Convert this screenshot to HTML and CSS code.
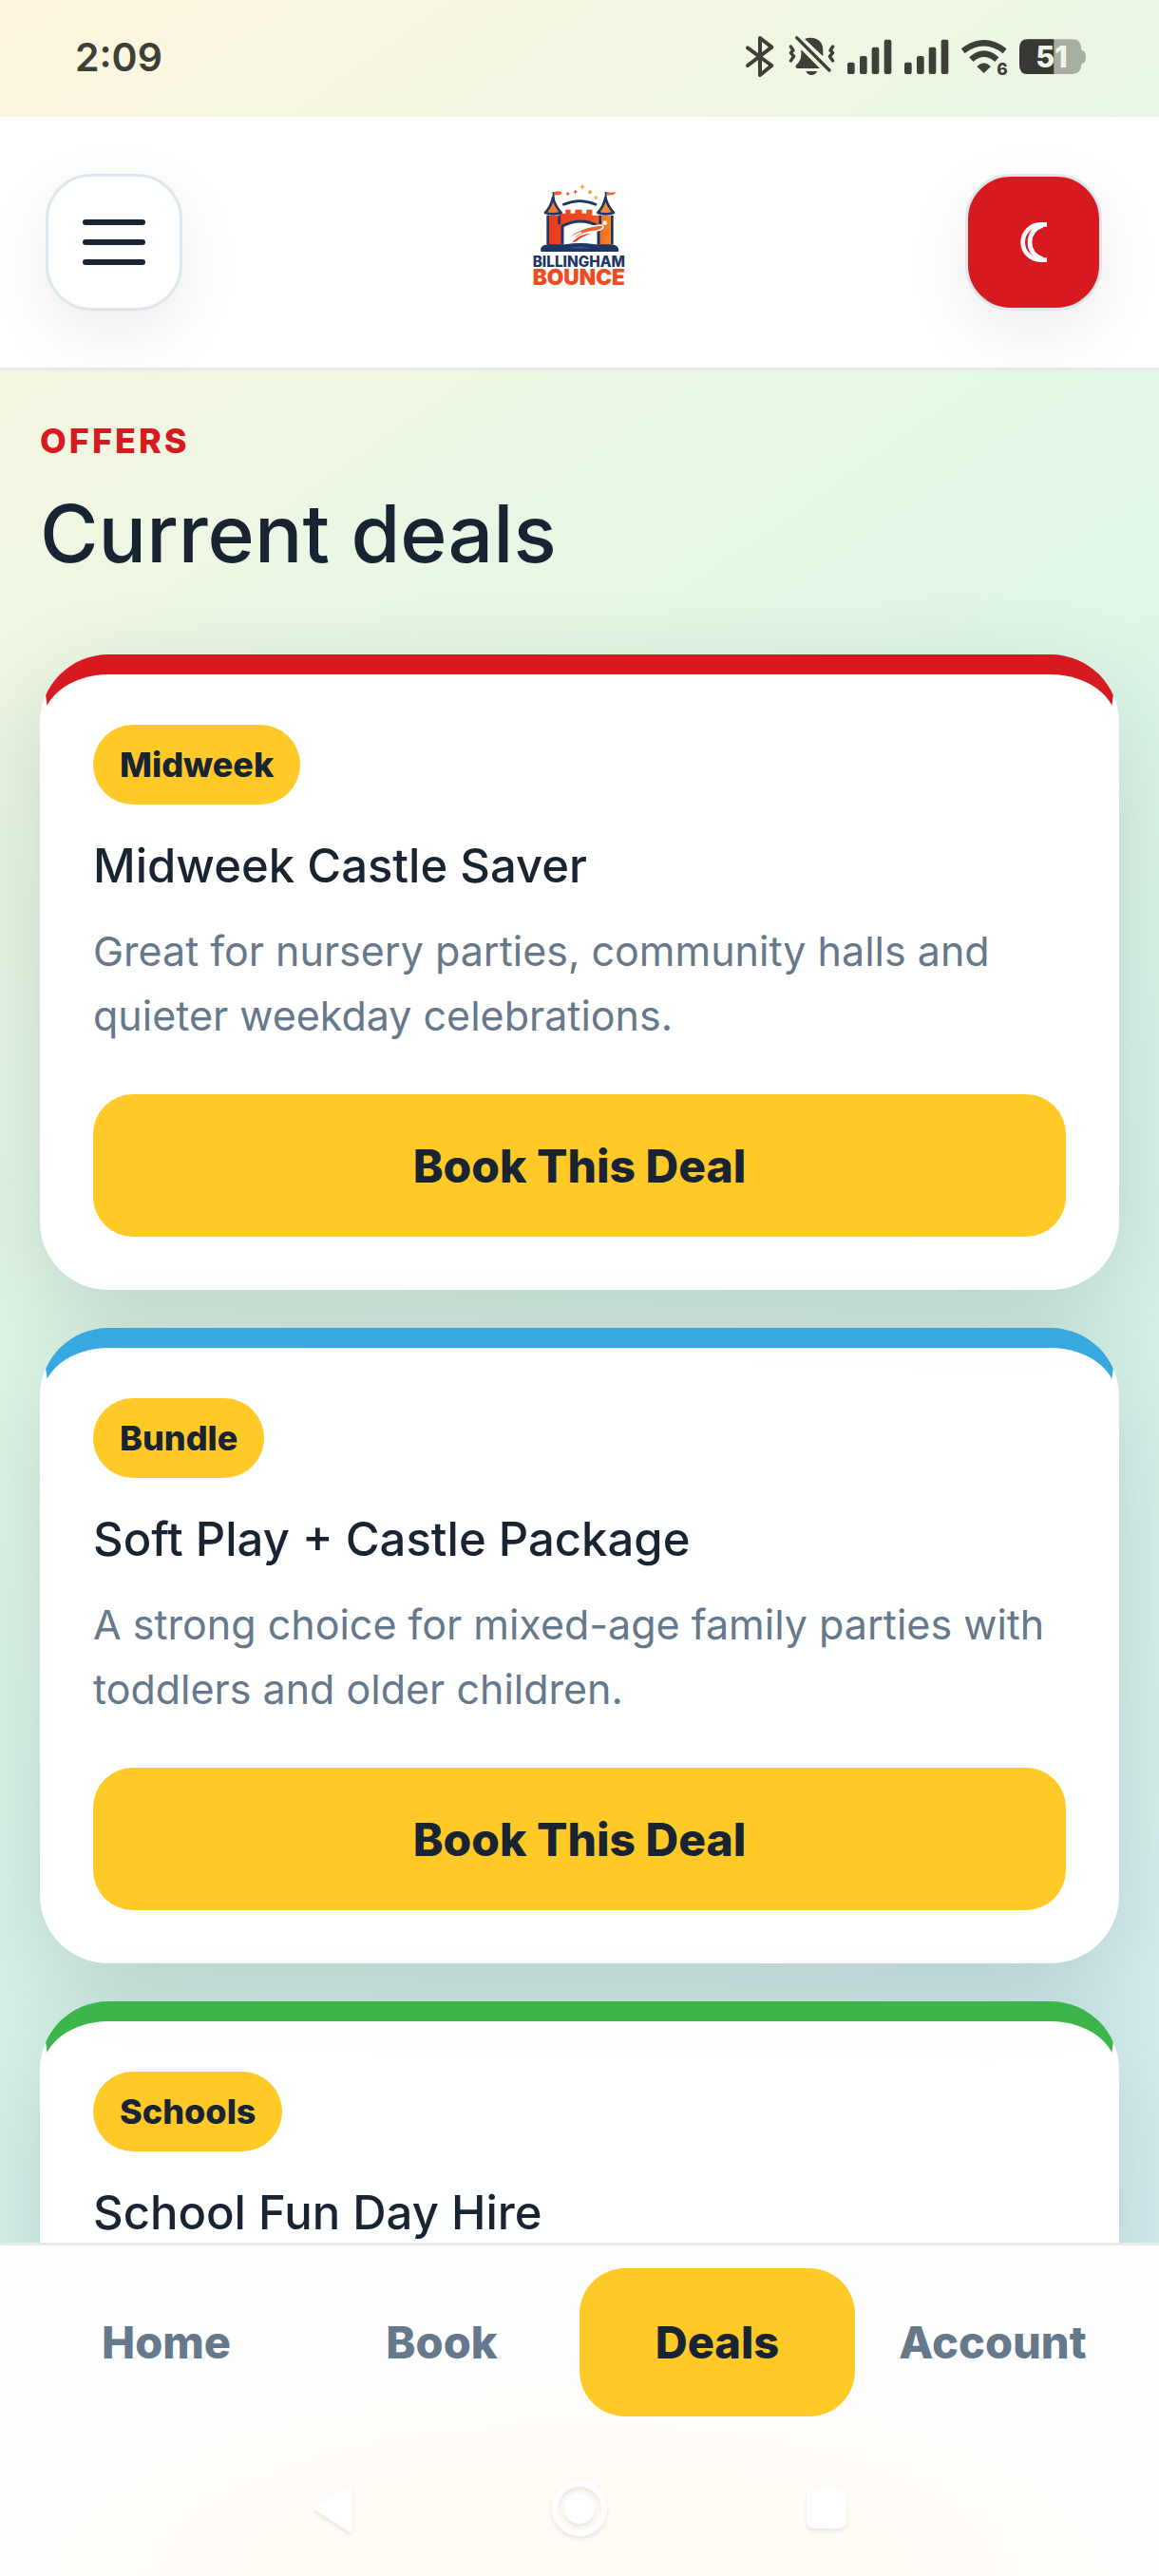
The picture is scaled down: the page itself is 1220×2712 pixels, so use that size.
FILE: index.html
```
<!DOCTYPE html>
<html lang="en">
<head>
  <meta charset="UTF-8">
  <meta name="viewport" content="width=device-width, initial-scale=1">
  <title>Billingham Bounce - Deals</title>
  <link rel="stylesheet" href="styles.css">
</head>
<body>
  <div class="status-bar">
    <span class="time">2:09</span>
    <svg class="status-icons" viewBox="0 -16 1080 162" width="360" height="54" aria-hidden="true">
      <!-- bluetooth -->
      <path d="M12 36 L88 92 L51 122 V5 L88 34 L12 92" fill="none" stroke="#3e3f38" stroke-width="12" stroke-linejoin="round" stroke-linecap="round"/>
      <!-- muted bell -->
      <g fill="#3e3f38">
        <path d="M192 8 q16 -6 31 -2 q27 8 27 39 v18 z"/>
        <path d="M181 42 L240 101 H168 q-8 -4 -2 -11 q15 -15 15 -32z"/>
        <path d="M196 110 h36 q-6 12 -18 12 t-18 -12z"/>
      </g>
      <path d="M167 4 L270 107 M148 32 l8 12 l-8 8 l10 11 l-10 14 M281 32 l-8 12 l8 8 l-10 11 l10 14" fill="none" stroke="#3e3f38" stroke-width="10" stroke-linecap="round" stroke-linejoin="round"/>
      <!-- signal -->
      <g fill="#3e3f38">
        <rect x="327" y="82" width="23" height="37" rx="6"/><rect x="366" y="62" width="23" height="57" rx="6"/><rect x="404" y="34" width="23" height="85" rx="6"/><rect x="443" y="10" width="23" height="109" rx="6"/>
        <rect x="507" y="82" width="23" height="37" rx="6"/><rect x="546" y="62" width="23" height="57" rx="6"/><rect x="584" y="34" width="23" height="85" rx="6"/><rect x="623" y="10" width="23" height="109" rx="6"/>
        <path d="M758 116 L736 95 q22 -22 44 0z"/>
      </g>
      <!-- wifi -->
      <path d="M692 46 q66 -50 132 0 M718 73 q40 -36 81 0" fill="none" stroke="#3e3f38" stroke-width="19"/>
      <text x="799" y="122" class="wifi-num">6</text>
      <!-- battery -->
      <path d="M896 9 h142 q28 0 28 34 q14 3 14 22 t-14 22 q0 32 -28 32 h-142 q-26 0 -26 -30 v-50 q0 -28 26 -28z" fill="#a7afa1"/>
      <path d="M979 9 h-83 q-26 0 -26 28 v52 q0 30 26 30 h83z" fill="#373832"/>
      <text x="922" y="98" class="battery-num">51</text>
    </svg>
  </div>

  <header class="header">
    <button class="icon-btn" type="button" aria-label="Menu">
      <span class="line"></span>
      <span class="line"></span>
      <span class="line"></span>
    </button>

    <svg class="logo" viewBox="-18 15 480 420" width="160" height="140" role="img" aria-label="Billingham Bounce">
      <defs>
        <linearGradient id="wall" x1="0" x2="1">
          <stop offset="0" stop-color="#e83b20"/>
          <stop offset=".7" stop-color="#f4501f"/>
          <stop offset="1" stop-color="#f68a2a"/>
        </linearGradient>
      </defs>
      <path d="M190 106 q50 -22 101 0" fill="none" stroke="#1c3763" stroke-width="8" stroke-linecap="round"/>
      <path d="M158 66 v28 M323 66 v28" stroke="#1c3763" stroke-width="6"/>
      <path d="M160 66 q12 -5 24 1 q-2 10 -10 9 q-7 -1 -14 1z M326 66 q14 4 29 0 q-6 11 -14 10 q-8 -1 -15 1z" fill="#f4622e"/>
      <path d="M138 140 h38 v-6 h20 v-12 h16 v12 h14 v-12 h22 v12 h14 v-12 h18 v18 h61 v97 h-41 v-65 q-58 -32 -116 0 v65 h-46z" fill="url(#wall)"/>
      <path d="M186 232 v-58 q56 -30 114 0 v58" fill="#fff" stroke="#1c3763" stroke-width="9"/>
      <path d="M140 140 v92 M343 140 v92 M176 140 v28 M305 140 v30" stroke="#1c3763" stroke-width="8"/>
      <path d="M156 84 q-5 27 -24 48 q24 8 50 0 q-19 -21 -26 -48z" fill="#f4792a" stroke="#1c3763" stroke-width="8" stroke-linejoin="round"/>
      <path d="M322 84 q-5 27 -24 48 q24 8 50 0 q-19 -21 -26 -48z" fill="#f68a2a" stroke="#1c3763" stroke-width="8" stroke-linejoin="round"/>
      <path d="M196 223 q26 -42 108 -52 q14 0 10 9 q-8 9 -40 12 q-36 6 -58 32 q8 -24 30 -30 q-30 10 -50 29z" fill="#f0642a" stroke="#fff" stroke-width="5"/>
      <path d="M216 226 q22 -28 64 -29 q-32 8 -50 26z" fill="#e94424"/>
      <circle cx="320" cy="164" r="7" fill="#fff"/>
      <path d="M120 253 q-4 -17 20 -19 h56 q46 -8 92 0 h54 q22 2 19 19z" fill="#1c3763" stroke="#1c3763" stroke-width="4" stroke-linejoin="round"/>
      <path d="M205 244 q36 -9 78 0z" fill="#3a5c91"/>
      <path d="M249 40 l3 7 l7 3 l-7 3 l-3 7 l-3 -7 l-7 -3 l7 -3z" fill="#f4ad45"/>
      <path d="M227 58 l2 6 l6 2 l-6 2 l-2 6 l-2 -6 l-6 -2 l6 -2z" fill="#e94424"/>
      <circle cx="203" cy="72" r="5" fill="#ee6a42"/><circle cx="273" cy="67" r="6" fill="#f4a23f"/><circle cx="292" cy="84" r="5" fill="#f4ad45"/>
      <text x="238" y="303" class="logo-top">BILLINGHAM</text>
      <text x="238" y="359" class="logo-bottom">BOUNCE</text>
    </svg>

    <button class="icon-btn theme-btn" type="button" aria-label="Toggle dark mode">
      <svg viewBox="0 0 84 126" width="28" height="42" aria-hidden="true">
        <path d="M84 7 H64 A56 56 0 0 0 64 119 H84" fill="none" stroke="#fff" stroke-width="14"/>
        <path d="M70 10 Q30 24 30 63 T70 116" fill="none" stroke="#fff" stroke-width="14"/>
      </svg>
    </button>
  </header>

  <main class="main">
    <p class="eyebrow">Offers</p>
    <h1>Current deals</h1>

    <div class="deals">
      <article class="card card-red">
        <span class="badge">Midweek</span>
        <h2>Midweek Castle Saver</h2>
        <p>Great for nursery parties, community halls and quieter weekday celebrations.</p>
        <button class="book-btn" type="button">Book This Deal</button>
      </article>

      <article class="card card-blue">
        <span class="badge">Bundle</span>
        <h2>Soft Play + Castle Package</h2>
        <p>A strong choice for mixed-age family parties with toddlers and older children.</p>
        <button class="book-btn" type="button">Book This Deal</button>
      </article>

      <article class="card card-green">
        <span class="badge">Schools</span>
        <h2>School Fun Day Hire</h2>
      </article>
    </div>
  </main>

  <footer class="bottom">
    <nav class="tabs">
      <a href="#home">Home</a>
      <a href="#book">Book</a>
      <a href="#deals" class="active">Deals</a>
      <a href="#account">Account</a>
    </nav>
    <div class="system-nav" aria-hidden="true">
      <svg viewBox="0 0 60 60" width="60" height="60"><path d="M14 30 L48 10 V52z" stroke="#fff" stroke-width="5" stroke-linejoin="round"/></svg>
      <svg viewBox="0 0 60 60" width="60" height="60"><circle cx="30" cy="30" r="26" class="ring"/><circle cx="30" cy="30" r="16"/></svg>
      <svg viewBox="0 0 60 60" width="60" height="60"><rect x="9" y="9" width="42" height="42" rx="8"/></svg>
    </div>
  </footer>
</body>
</html>
```
FILE: styles.css
```
* {
  box-sizing: border-box;
}

body {
  margin: 0;
  height: 100vh;
  display: flex;
  flex-direction: column;
  overflow: hidden;
  font-family: Inter, "Noto Sans", sans-serif;
  color: #182432;
  background: linear-gradient(145deg, #fff6de 0%, #e9f7e4 25%, #dcf7e7 44%, #d6f3ea 64%, #d3ebf2 100%);
}

h1,
h2,
p {
  margin: 0;
}

/* status bar */
.status-bar {
  display: flex;
  justify-content: space-between;
  align-items: center;
  height: 123px;
  padding: 0 77px 4px 79px;
}

.time {
  font-size: 41px;
  font-weight: 600;
  color: #3e3f38;
}

.wifi-num {
  font-size: 52px;
  font-weight: 800;
  fill: #3e3f38;
}

.battery-num {
  font-size: 92px;
  font-weight: 800;
  fill: #f1f6e8;
}

/* header */
.header {
  display: flex;
  justify-content: space-between;
  align-items: center;
  height: 267px;
  padding: 0 60px 0 48px;
  background: rgba(255, 255, 255, 0.96);
  border-bottom: 3px solid #e9ebea;
}

.icon-btn {
  display: flex;
  flex-direction: column;
  justify-content: center;
  align-items: center;
  gap: 15px;
  width: 144px;
  height: 144px;
  padding: 0;
  border: 3px solid #dde7ef;
  border-radius: 48px;
  background: #fff;
  box-shadow: 0 24px 72px rgba(0, 0, 0, 0.08);
}

.line {
  width: 66px;
  height: 6px;
  border-radius: 3px;
  background: #182432;
}

.theme-btn {
  background: #d71920;
}

.logo-top,
.logo-bottom {
  text-anchor: middle;
}

.logo-top {
  font-size: 46px;
  font-weight: 800;
  fill: #1c3763;
}

.logo-bottom {
  font-size: 68px;
  font-weight: 900;
  fill: #f04a23;
}

/* content */
.main {
  flex: 1;
  min-height: 0;
  overflow: hidden;
  padding: 52px 42px 0;
}

.eyebrow {
  font-size: 36px;
  line-height: 44px;
  font-weight: 800;
  letter-spacing: 3px;
  text-transform: uppercase;
  color: #d71920;
}

h1 {
  margin: 31px 0 82px;
  font-size: 84px;
  line-height: 90px;
  font-weight: 500;
}

.deals {
  display: flex;
  flex-direction: column;
  gap: 40px;
}

.card {
  padding: 53px;
  border: 3px solid rgba(255, 255, 255, 0.8);
  border-top-width: 21px;
  border-radius: 72px;
  background: rgba(255, 255, 255, 0.96);
  box-shadow: 0 36px 105px rgba(24, 36, 50, 0.16);
}

.card-red {
  border-top-color: #d71920;
}

.card-blue {
  border-top-color: #38a8e0;
}

.card-green {
  border-top-color: #3cb54a;
}

.badge {
  display: block;
  width: fit-content;
  padding: 0 28px;
  border-radius: 42px;
  background: #ffc928;
  font-size: 36px;
  line-height: 84px;
  font-weight: 800;
}

h2 {
  margin: 35px 0 25px;
  font-size: 49px;
  line-height: 60px;
  font-weight: 500;
}

.card p {
  font-size: 43px;
  line-height: 68px;
  color: #66788c;
}

.book-btn {
  display: block;
  width: 100%;
  height: 150px;
  margin-top: 49px;
  border: 0;
  border-radius: 42px;
  background: #ffc928;
  color: #182432;
  font-family: inherit;
  font-size: 48px;
  font-weight: 800;
}

/* bottom bar */
.bottom {
  border-top: 3px solid #e9ebea;
  background: radial-gradient(ellipse 55% 70% at 50% 100%, #fffbf4 40%, #fefefe 100%);
}

.tabs {
  display: grid;
  grid-template-columns: repeat(4, 1fr);
  padding: 24px 30px 0;
}

.tabs a {
  border-radius: 48px;
  font-size: 47px;
  line-height: 156px;
  font-weight: 800;
  text-align: center;
  text-decoration: none;
  color: #66788c;
}

.tabs .active {
  background: #ffc928;
  color: #182432;
}

.system-nav {
  display: flex;
  justify-content: center;
  gap: 200px;
  padding: 67px 0 41px;
}

.system-nav svg {
  fill: #fff;
  filter: drop-shadow(0 3px 2px rgba(0, 0, 0, 0.08));
}

.system-nav .ring {
  fill: none;
  stroke: #fff;
  stroke-width: 6;
}
```
